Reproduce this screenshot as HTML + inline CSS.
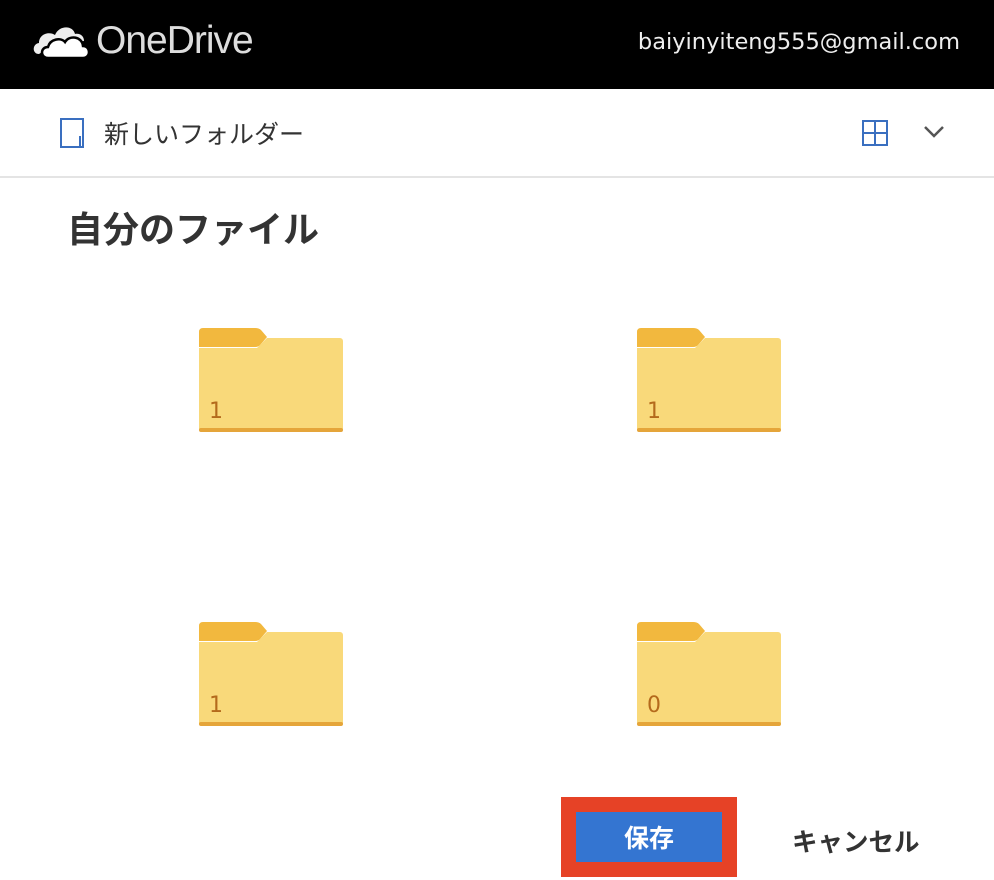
<!DOCTYPE html>
<html><head><meta charset="utf-8"><style>
*{margin:0;padding:0;box-sizing:border-box}
body{width:994px;height:880px;background:#fff;position:relative;overflow:hidden;font-family:"Liberation Sans","Noto Sans CJK JP",sans-serif}
.top{position:absolute;left:0;top:0;width:994px;height:89px;background:#000}
.logo{position:absolute;left:96px;top:19px;color:#ddd;font-size:39px;font-family:"Liberation Sans",sans-serif;letter-spacing:-1px}
.mail{position:absolute;right:34px;top:29px;color:#eee;font-size:22.5px;font-family:"DejaVu Sans",sans-serif}
.bar{position:absolute;left:0;top:89px;width:994px;height:89px;border-bottom:2px solid #e4e4e4}
.nf{position:absolute;left:104px;top:115px;font-size:25px;color:#333}
h1{position:absolute;left:67px;top:201px;font-size:36px;color:#333;font-weight:bold}
.f{position:absolute;width:146px;height:106px}
.num{position:absolute;left:10px;top:72px;color:#b46a1c;font-size:22px;font-family:"DejaVu Sans",sans-serif}
.red{position:absolute;left:561px;top:797px;width:176px;height:80px;background:#e64226}
.blue{position:absolute;left:576px;top:812px;width:146px;height:50px;background:#3475d1;color:#fff;font-size:25px;font-weight:bold;text-align:center;line-height:54px}
.cancel{position:absolute;left:792px;top:822px;font-size:25.5px;font-weight:bold;color:#333}
</style></head><body>
<div class="top">
<svg style="position:absolute;left:31px;top:20px" width="60" height="40" viewBox="0 0 60 40"><path d="M8 34 C1 34 1 24 8 23 C8 14 18 11 24 15 C28 5 42 5 44 14 C49 13 53 16 53 21 L24 24 Z" fill="#eee"/><path d="M17 38 C9 38 9 27 17 27 C19 19 30 17 34 22 C38 15 51 16 52 26 C60 26 60 38 52 38 Z" fill="#fff" stroke="#000" stroke-width="2.5"/></svg>
<div class="logo">OneDrive</div>
<div class="mail">baiyinyiteng555@gmail.com</div>
</div>
<div class="bar">
<svg style="position:absolute;left:60px;top:29px" width="26" height="32"><rect x="1" y="1" width="22" height="28" fill="none" stroke="#3a6fc0" stroke-width="2"/><path d="M20 18 v10" stroke="#3a6fc0" stroke-width="2"/></svg>
<svg style="position:absolute;left:862px;top:31px" width="26" height="26"><rect x="1" y="1" width="24" height="24" fill="none" stroke="#3a6fc0" stroke-width="2"/><path d="M13 1v24M1 13h24" stroke="#3a6fc0" stroke-width="2"/></svg>
<svg style="position:absolute;left:923px;top:36px" width="22" height="14"><path d="M2 2l9 9 9-9" fill="none" stroke="#555" stroke-width="2.5"/></svg>
</div>
<div class="nf">新しいフォルダー</div>
<h1>自分のファイル</h1>
<svg width="0" height="0" style="position:absolute"><defs><g id="fd"><path d="M4 1H56Q60 1 62 3L68 10L62 17Q60 20 56 20H0V5Q0 1 4 1Z" fill="#f2b83e"/><path d="M0 21H58L68 11H141a3 3 0 0 1 3 3V103H0Z" fill="#f9d97a"/><rect x="0" y="101" width="144" height="4" rx="2" fill="#e5a53a"/></g></defs></svg>
<div class="f" style="left:199px;top:327px"><svg width="146" height="106"><use href="#fd"/></svg><div class="num">1</div></div>
<div class="f" style="left:637px;top:327px"><svg width="146" height="106"><use href="#fd"/></svg><div class="num">1</div></div>
<div class="f" style="left:199px;top:621px"><svg width="146" height="106"><use href="#fd"/></svg><div class="num">1</div></div>
<div class="f" style="left:637px;top:621px"><svg width="146" height="106"><use href="#fd"/></svg><div class="num">0</div></div>
<div class="red"></div>
<div class="blue">保存</div>
<div class="cancel">キャンセル</div>
</body></html>
